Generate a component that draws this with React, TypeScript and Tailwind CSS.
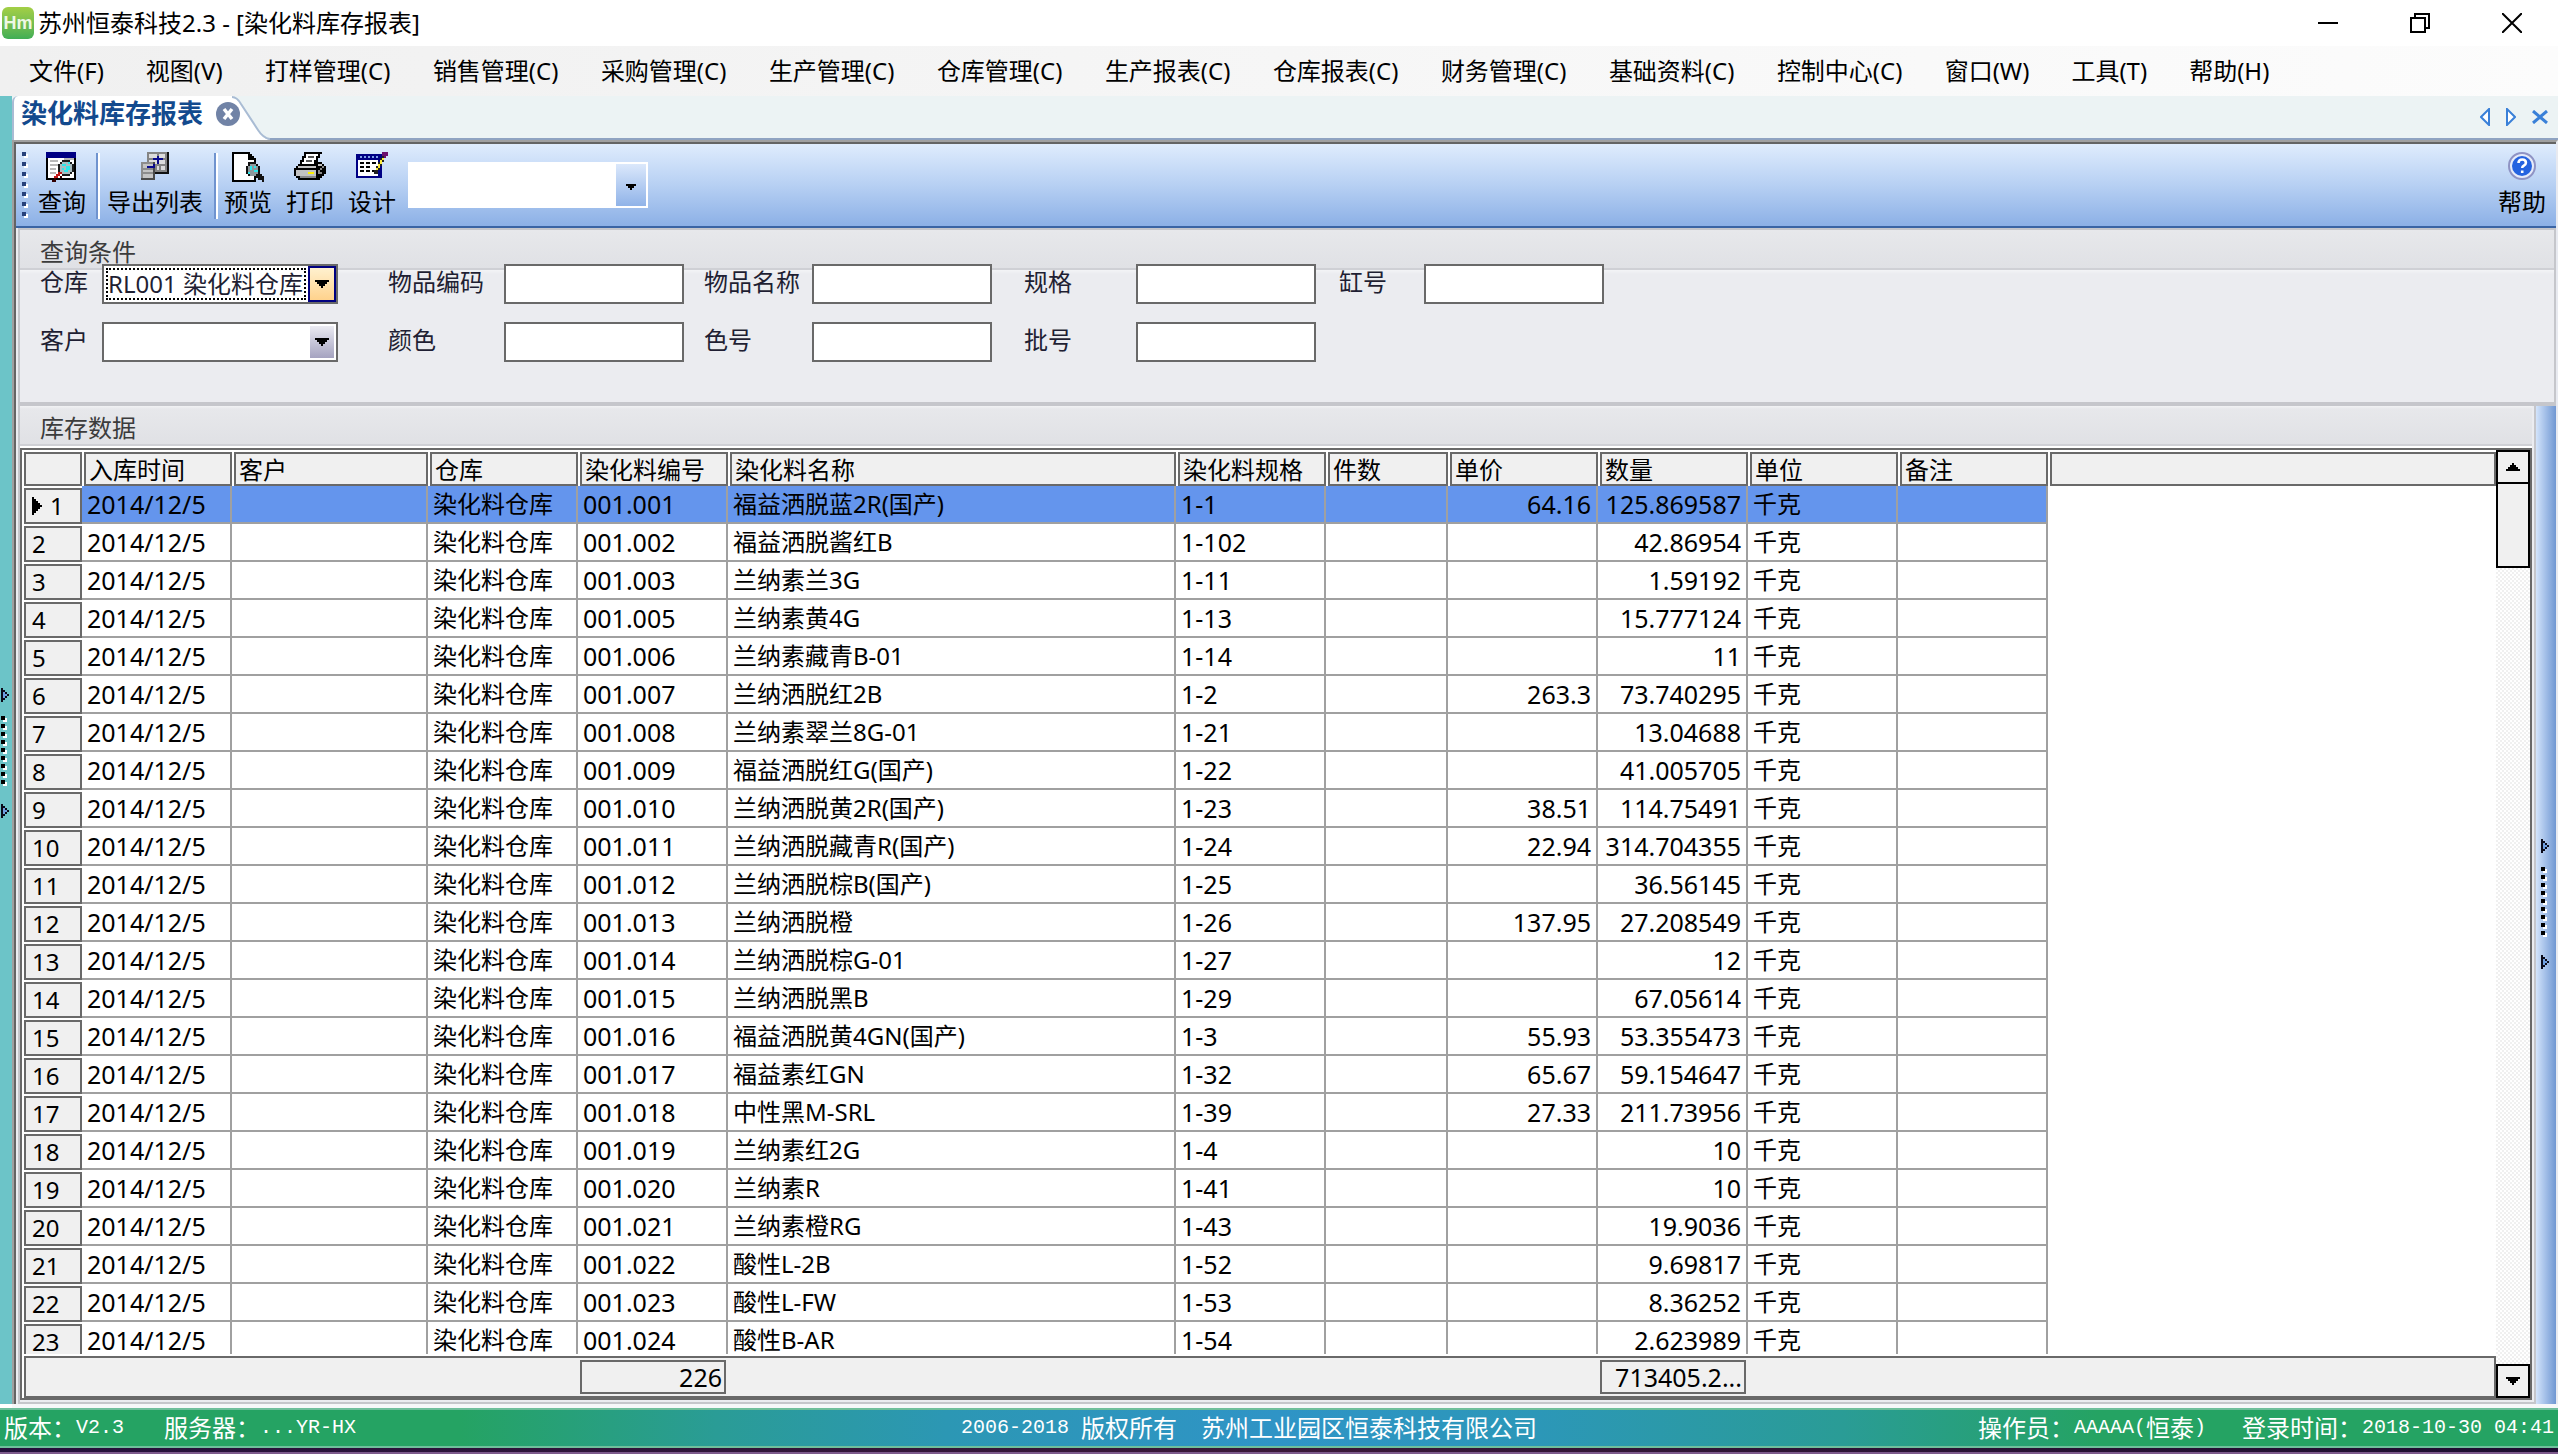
import React from "react";

const menus = [
  "文件(F)", "视图(V)", "打样管理(C)", "销售管理(C)", "采购管理(C)", "生产管理(C)", "仓库管理(C)",
  "生产报表(C)", "仓库报表(C)", "财务管理(C)", "基础资料(C)", "控制中心(C)", "窗口(W)", "工具(T)", "帮助(H)",
];

type Row = [code: string, name: string, spec: string, price: string, qty: string];

const rows: Row[] = [
  ["001.001", "福益洒脱蓝2R(国产)", "1-1", "64.16", "125.869587"],
  ["001.002", "福益洒脱酱红B", "1-102", "", "42.86954"],
  ["001.003", "兰纳素兰3G", "1-11", "", "1.59192"],
  ["001.005", "兰纳素黄4G", "1-13", "", "15.777124"],
  ["001.006", "兰纳素藏青B-01", "1-14", "", "11"],
  ["001.007", "兰纳洒脱红2B", "1-2", "263.3", "73.740295"],
  ["001.008", "兰纳素翠兰8G-01", "1-21", "", "13.04688"],
  ["001.009", "福益洒脱红G(国产)", "1-22", "", "41.005705"],
  ["001.010", "兰纳洒脱黄2R(国产)", "1-23", "38.51", "114.75491"],
  ["001.011", "兰纳洒脱藏青R(国产)", "1-24", "22.94", "314.704355"],
  ["001.012", "兰纳洒脱棕B(国产)", "1-25", "", "36.56145"],
  ["001.013", "兰纳洒脱橙", "1-26", "137.95", "27.208549"],
  ["001.014", "兰纳洒脱棕G-01", "1-27", "", "12"],
  ["001.015", "兰纳洒脱黑B", "1-29", "", "67.05614"],
  ["001.016", "福益洒脱黄4GN(国产)", "1-3", "55.93", "53.355473"],
  ["001.017", "福益素红GN", "1-32", "65.67", "59.154647"],
  ["001.018", "中性黑M-SRL", "1-39", "27.33", "211.73956"],
  ["001.019", "兰纳素红2G", "1-4", "", "10"],
  ["001.020", "兰纳素R", "1-41", "", "10"],
  ["001.021", "兰纳素橙RG", "1-43", "", "19.9036"],
  ["001.022", "酸性L-2B", "1-52", "", "9.69817"],
  ["001.023", "酸性L-FW", "1-53", "", "8.36252"],
  ["001.024", "酸性B-AR", "1-54", "", "2.623989"],
];

const headers = ["入库时间", "客户", "仓库", "染化料编号", "染化料名称", "染化料规格", "件数", "单价", "数量", "单位", "备注"];

function Columns() {
  return (
    <colgroup>
      <col className="w-[58px]" />
      <col className="w-[150px]" />
      <col className="w-[196px]" />
      <col className="w-[150px]" />
      <col className="w-[150px]" />
      <col className="w-[448px]" />
      <col className="w-[150px]" />
      <col className="w-[122px]" />
      <col className="w-[150px]" />
      <col className="w-[150px]" />
      <col className="w-[150px]" />
      <col className="w-[150px]" />
      <col />
    </colgroup>
  );
}

function Pixel({ children }: { children: React.ReactNode }) {
  return (
    <svg viewBox="0 0 16 16" className="h-8 w-8 shrink-0" shapeRendering="crispEdges" aria-hidden="true">
      {children}
    </svg>
  );
}

function QueryIcon() {
  return (
    <Pixel>
      <path d="M0 0h15v14H0z" fill="#000" />
      <path d="M0 0h15v3H0z" fill="#000084" />
      <path d="M1 3h13v10H1z" fill="#fff" />
      <path d="M2 4h4v1H2zM2 6h4v1H2zM2 8h3v1H2zM2 10h3v1H2zM9 3h5v1H9z" fill="#b8b8b8" />
      <path d="M8 4h4v1h1v1h1v4h-1v1h-1v1H8v-1H7v-1H6V6h1V5h1z" fill="#1a1a1a" />
      <path d="M8 5h4v1h1v4h-1v1H8v-1H7V6h1z" fill="#a9bcc0" />
      <path d="M8 6h2v1H8zM10 7h2v2h-2zM8 8h1v1H8zM11 5h1v1h-1zM9 9h2v1H9z" fill="#2ee6ea" />
      <path d="M6 10h2v1H7v1H6v1H5v1H4v-2h1v-1h1z" fill="#c01818" />
      <path d="M4 13h1v2H3v-1h1zM7 12h1v1H7z" fill="#300" />
    </Pixel>
  );
}

function ExportIcon() {
  return (
    <Pixel>
      <path d="M4 0h11v11H4z" fill="#111" />
      <path d="M4 0h10v10H4z" fill="#848484" />
      <path d="M5 1h4v2H5zM10 1h3v2h-3zM5 4h4v2H5zM10 4h3v2h-3zM9 7h1v2H9zM11 7h2v2h-2z" fill="#dcdcdc" />
      <path d="M1 5h7v9H1z" fill="#4a4a4a" />
      <path d="M1 5h6v8H1z" fill="#8c8c8c" />
      <path d="M2 6h5v2H2zM2 9h5v1H2zM2 11h5v2H2z" fill="#c4c4c4" />
      <path d="M9 2h1v4H9zM7 3h5v1H7zM4 7h4v1H4zM7 6h1v1H7z" fill="#0a0a8c" />
    </Pixel>
  );
}

function PreviewIcon() {
  return (
    <Pixel>
      <path d="M0 0h9v1h1v1h1v1h1v12H0z" fill="#000" />
      <path d="M1 1h7v3h3v10H1z" fill="#fff" />
      <path d="M8 5h4v1h1v1h1v4h1v1h1v2h1v1h-2v-1h-2v-1h-1v-1H8v-1H7V7h1z" fill="#111" />
      <path d="M9 6h3v1h1v4h-1v1H9v-1H8V7h1z" fill="#8e989c" />
      <path d="M9 7h1v2H9zM11 9h2v1h-2zM8 10h1v1H8zM11 7h1v1h-1z" fill="#2ee6ea" />
    </Pixel>
  );
}

function PrintIcon() {
  return (
    <Pixel>
      <path d="M5 0h9v1h-1v2h-1v2h2v1h1v1h1v4h-1v1h-1v1h-1v1H2v-1H1v-1H0V8h1V7h1V6h1V4h1V2h1z" fill="#000" />
      <path d="M6 1h6v1h-1v2h-1v2H4V5h1V3h1z" fill="#fff" />
      <path d="M7 2h3v1H7zM6 4h3v1H6z" fill="#555" />
      <path d="M2 7h9v1H2zM1 9h10v3H1zM12 6h2v1h-2z" fill="#c2c2c2" />
      <path d="M3 13h8v-1H3zM13 8h1v1h-1zM12 9h1v2h-1zM14 7h1v1h-1zM13 10h1v1h-1z" fill="#8a8a8a" />
      <path d="M7 10h3v1H7z" fill="#fff100" />
    </Pixel>
  );
}

function DesignIcon() {
  return (
    <Pixel>
      <path d="M0 1h13v12H0z" fill="#000084" />
      <path d="M2 2h1v1H2zM4 2h1v1H4zM6 2h1v1H6zM8 2h1v1H8zM10 2h1v1h-1z" fill="#7ea0e8" />
      <path d="M1 4h10v8H1z" fill="#fff" />
      <path d="M2 5h2v1H2zM5 5h2v1H5zM8 5h2v1H8zM2 7h2v1H2zM5 7h2v1H5zM2 9h2v1H2zM5 9h2v1H5zM8 9h1v1H8z" fill="#000" />
      <path d="M13 1h2v2h-1v2h-1v2h-1v2h-1v2H9V9h1V7h1V5h1V3h1z" fill="#222" />
      <path d="M13 3h1v1h-1v2h-1v2h-1v1h-1V8h1V6h1V4h1z" fill="#ffec3d" />
      <path d="M13 0h3v2h-1v1h-1V2h-1z" fill="#6b0f6b" />
    </Pixel>
  );
}

function ToolButton({ label, icon }: { label: string; icon: React.ReactNode }) {
  return (
    <button className="flex flex-col items-center px-[7px] pt-2 text-[24px] leading-7 text-black">
      {icon}
      <span className="pt-1">{label}</span>
    </button>
  );
}

function Divider() {
  return <span className="mt-[9px] h-[66px] w-1 shrink-0 border-l-2 border-[#6f93cf] bg-white" />;
}

function SplitterGrip() {
  return (
    <svg viewBox="0 0 5 66" className="h-[132px] w-[10px] shrink-0" shapeRendering="crispEdges" aria-hidden="true">
      {[0, 58].map((y) => (
        <g key={y}>
          <path d={`M0 ${y}h1v1h1v1h1v1h1v1h-1v1h-1v1h-1v1h-1z`} fill="#0b0b1a" />
          <path d={`M1 ${y + 2}h1v1h1v1h-1v1h-1z`} fill="#6f9fe0" />
        </g>
      ))}
      {Array.from({ length: 9 }, (_, i) => (
        <g key={i}>
          <path d={`M1 ${15 + i * 4}h2v2h-2z`} fill="#fff" />
          <path d={`M0 ${14 + i * 4}h2v2h-2z`} fill="#000" />
        </g>
      ))}
    </svg>
  );
}

function Arrow({ up = false }: { up?: boolean }) {
  return (
    <svg viewBox="0 0 7 4" className="h-2 w-[14px]" shapeRendering="crispEdges" aria-hidden="true">
      <path d={up ? "M3 0h1v1h1v1h1v1h1v1H0V3h1V2h1V1h1z" : "M0 0h7v1H6v1H5v1H4v1H3V3H2V2H1V1H0z"} fill="#000" />
    </svg>
  );
}

function Field({ id, label, gap }: { id: string; label: string; gap: string }) {
  return (
    <div className="flex h-10 items-start">
      <label htmlFor={id} className={`${gap} shrink-0 leading-9`}>{label}</label>
      <input id={id} className="h-10 w-[180px] border-2 border-[#696969] bg-white px-1 text-[24px] outline-none" />
    </div>
  );
}

function Mono({ children }: { children: React.ReactNode }) {
  return <span className="whitespace-pre font-['Liberation_Mono',monospace] text-[20px]">{children}</span>;
}

export default function App() {
  return (
    <div className="flex h-screen flex-col overflow-hidden bg-white font-['Noto_Sans','Noto_Sans_CJK_SC',sans-serif] text-[24px] text-black">
      <header className="flex h-[46px] shrink-0 items-center bg-white">
        <span className="ml-[2px] flex h-8 w-8 items-center justify-center rounded-md bg-linear-to-b from-[#a3cf45] to-[#3fae55] font-['Liberation_Sans',sans-serif] text-[18px] font-bold text-[#eef8e4]">
          Hm
        </span>
        <h1 className="ml-1 flex-1">苏州恒泰科技2.3 - [染化料库存报表]</h1>
        <div className="flex h-full">
          <button aria-label="最小化" className="flex w-[92px] items-center justify-center">
            <svg viewBox="0 0 20 20" className="h-5 w-5"><path d="M0 10h20" stroke="#000" strokeWidth="2" /></svg>
          </button>
          <button aria-label="还原" className="flex w-[92px] items-center justify-center">
            <svg viewBox="0 0 20 20" className="h-5 w-5" fill="none" stroke="#000" strokeWidth="2">
              <path d="M1 5h14v14H1zM5 5V1h14v14h-4" />
            </svg>
          </button>
          <button aria-label="关闭" className="flex w-[92px] items-center justify-center">
            <svg viewBox="0 0 20 20" className="h-5 w-5"><path d="M0 0l20 20M20 0L0 20" stroke="#000" strokeWidth="2" /></svg>
          </button>
        </div>
      </header>

      <nav className="flex h-[50px] shrink-0 items-center bg-linear-to-r from-[#f0f0f0] to-[#fcfcfc] pl-2">
        {menus.map((m) => (
          <button key={m} className={m.length > 5 ? "w-[168px] shrink-0" : "shrink-0 px-[21px]"}>{m}</button>
        ))}
      </nav>

      <div className="flex min-h-0 flex-1">
        <div className="flex w-3 shrink-0 items-center justify-center bg-[#6cc4c8] pt-2">
          <SplitterGrip />
        </div>

        <main className="flex min-w-0 flex-1 flex-col">
          <div className="flex h-11 shrink-0 justify-between border-b-2 border-[#8fa3c1] bg-[#ecf3f4]">
            <div className="relative -mb-[2px] flex h-11 items-start rounded-tl-md border-l-2 border-[#a9bcd4] bg-white pl-[7px]">
              <svg viewBox="0 0 40 44" className="absolute top-0 left-full h-11 w-10" aria-hidden="true">
                <path d="M0 0Q5 1 9 8L26 34Q31 43 38 44H0z" fill="#fff" />
                <path d="M0 1Q5 1 9 8L26 34Q31 42 38 43" fill="none" stroke="#a9bcd4" strokeWidth="2" />
              </svg>
              <span className="text-[26px] leading-[34px] font-bold text-[#134a8e]">染化料库存报表</span>
              <button aria-label="关闭标签" className="relative z-10 mt-[6px] -mr-2 ml-[13px]">
                <svg viewBox="0 0 24 24" className="h-6 w-6">
                  <circle cx="12" cy="12" r="12" fill="#7183a6" />
                  <path d="M8 7l8 10M16 7L8 17" stroke="#fff" strokeWidth="3.5" />
                </svg>
              </button>
            </div>
            <div className="flex items-center gap-4 pr-[10px]">
              <button aria-label="上一个标签">
                <svg viewBox="0 0 10 18" className="h-[18px] w-[10px]"><path d="M9 1v16L1 9z" fill="#fff" stroke="#3a80d8" strokeWidth="2" /></svg>
              </button>
              <button aria-label="下一个标签">
                <svg viewBox="0 0 10 18" className="h-[18px] w-[10px]"><path d="M1 1v16l8-8z" fill="#fff" stroke="#3a80d8" strokeWidth="2" /></svg>
              </button>
              <button aria-label="关闭当前标签">
                <svg viewBox="0 0 16 14" className="h-[14px] w-4"><path d="M1 1l14 12M15 1L1 13" stroke="#3a80d8" strokeWidth="3" /></svg>
              </button>
            </div>
          </div>

          <div className="flex min-h-0 flex-1 border-t-2 border-r-2 border-l-2 border-t-[#a0a0a0] border-r-[#e8eaf0] border-l-[#a0a0a0]">
            <div className="flex min-w-0 flex-1 flex-col border-t-2 border-l-2 border-[#646464] bg-[#ebecf0]">
              <div className="flex h-[84px] shrink-0 items-start border-b-2 border-[#3a64a4] bg-linear-to-b from-[#dfecfd] via-[#b7d0f3] to-[#8cb0e6]">
                <svg viewBox="0 0 3 33" className="mt-2 ml-[6px] h-[66px] w-[6px] shrink-0" shapeRendering="crispEdges" aria-hidden="true">
                  {Array.from({ length: 7 }, (_, i) => (
                    <g key={i}>
                      <path d={`M1 ${i * 5 + 1}h2v2h-2z`} fill="#fff" />
                      <path d={`M0 ${i * 5}h2v2h-2z`} fill="#27417a" />
                    </g>
                  ))}
                </svg>
                <div className="ml-[3px] flex">
                  <ToolButton label="查询" icon={<QueryIcon />} />
                </div>
                <div className="ml-[3px] flex">
                  <Divider />
                  <ToolButton label="导出列表" icon={<ExportIcon />} />
                  <span className="w-1" />
                  <Divider />
                </div>
                <div className="-ml-px flex">
                  <ToolButton label="预览" icon={<PreviewIcon />} />
                  <ToolButton label="打印" icon={<PrintIcon />} />
                  <ToolButton label="设计" icon={<DesignIcon />} />
                </div>
                <div className="relative mt-[18px] ml-[5px] h-[46px] w-60">
                  <select aria-label="报表格式" className="h-full w-full appearance-none bg-white outline-none">
                    <option></option>
                  </select>
                  <span className="pointer-events-none absolute inset-y-[2px] right-[2px] flex w-[30px] items-center justify-center bg-linear-to-b from-[#dbe8fb] to-[#90b3e8] pt-1">
                    <svg viewBox="0 0 5 3" className="h-[6px] w-[10px]" shapeRendering="crispEdges" aria-hidden="true">
                      <path d="M0 0h5v1H4v1H3v1H2V2H1V1H0z" fill="#000" />
                    </svg>
                  </span>
                </div>
                <button className="mr-[10px] ml-auto flex flex-col items-center pt-2 leading-7">
                  <svg viewBox="0 0 28 28" className="h-7 w-7" aria-hidden="true">
                    <circle cx="14" cy="14" r="13" fill="#e6ebfa" stroke="#8f93c4" strokeWidth="2" />
                    <circle cx="14" cy="14" r="10" fill="#2563e0" />
                    <path d="M10.500 11q0-3.500 3.700-3.500t3.700 3.200q0 2-2.200 3-1.500.8-1.500 2.300M14.200 18.500v2.500" fill="none" stroke="#fff" strokeWidth="2.600" />
                  </svg>
                  <span className="pt-2">帮助</span>
                </button>
              </div>

              <section className="ml-[2px] shrink-0 border-x-2 border-t-2 border-b-4 border-[#c5c6cb] bg-[linear-gradient(#e7e8eb_0,#e0e1e5_38px,#cfd0d5_38px,#cfd0d5_40px,#f3f4f6_40px,#ebecf0_44px)] pb-10 pl-5 text-[#1f1f33]">
                <h2 className="h-[34px] pt-[5px] leading-[34px] text-[#3c3c3c]">查询条件</h2>
                <form className="grid w-fit grid-cols-[348px_316px_320px_315px_280px] gap-y-[18px]">
                  <div className="flex">
                    <label htmlFor="warehouse" className="w-[62px] leading-9">仓库</label>
                    <div className="relative h-10 w-[236px] border-2 border-[#696969] bg-white">
                      <select id="warehouse" className="absolute top-[2px] left-[2px] h-8 w-[200px] appearance-none border-2 border-dotted border-black bg-white text-[24px] leading-7 text-[#1f1f33] outline-none">
                        <option>RL001 染化料仓库</option>
                      </select>
                      <span className="pointer-events-none absolute inset-y-0 right-0 flex w-7 items-center justify-center border-2 border-[#000080] bg-linear-to-b from-[#fff1cf] to-[#ffd28c]">
                        <Arrow />
                      </span>
                    </div>
                  </div>
                  <Field id="code" label="物品编码" gap="w-[116px]" />
                  <Field id="name" label="物品名称" gap="w-[108px]" />
                  <Field id="spec" label="规格" gap="w-[112px]" />
                  <Field id="vat" label="缸号" gap="w-[85px]" />
                  <div className="flex">
                    <label htmlFor="customer" className="w-[62px] leading-9">客户</label>
                    <div className="relative h-10 w-[236px] border-2 border-[#696969] bg-white">
                      <select id="customer" className="h-full w-full appearance-none bg-white outline-none">
                        <option></option>
                      </select>
                      <span className="pointer-events-none absolute inset-y-[2px] right-[2px] flex w-6 items-center justify-center bg-linear-to-b from-[#ebebf2] to-[#a5a3c0]">
                        <Arrow />
                      </span>
                    </div>
                  </div>
                  <Field id="color" label="颜色" gap="w-[116px]" />
                  <Field id="colorNo" label="色号" gap="w-[108px]" />
                  <Field id="batch" label="批号" gap="w-[112px]" />
                </form>
              </section>

              <div className="flex min-h-0 flex-1">
                <section className="ml-[2px] flex min-w-0 flex-1 flex-col border-x-2 border-b-2 border-[#c5c6cb] pr-[2px] pb-[2px]">
                  <h2 className="h-[42px] shrink-0 bg-[linear-gradient(#f1f2f4_0,#e7e8eb_3px,#e0e1e5_38px,#cfd0d5_38px,#cfd0d5_40px,#fff_40px)] pl-5 leading-[44px] text-[#3c3c3c]">库存数据</h2>
                  <div className="flex min-h-0 flex-1 border-2 border-[#696969] bg-white">
                    <div className="flex min-w-0 flex-1 flex-col pl-[2px]">
                      <div className="min-h-0 flex-1 overflow-hidden">
                        <table className="w-full table-fixed border-separate border-spacing-0">
                          <Columns />
                          <thead>
                            <tr>
                              <th className="p-0 pt-[2px]"><div className="h-[34px] border-2 border-[#696969] bg-[#f0f0f0]" /></th>
                              {headers.map((h) => (
                                <th key={h} className="p-0 pt-[2px] pl-[2px] text-left font-normal">
                                  <div className="h-[34px] border-2 border-[#696969] bg-[#f0f0f0] pl-[3px] leading-[32px]">{h}</div>
                                </th>
                              ))}
                              <th className="p-0 pt-[2px] pl-[2px]"><div className="h-[34px] border-2 border-[#696969] bg-[#f0f0f0]" /></th>
                            </tr>
                          </thead>
                          <tbody className="leading-9 [&_td]:h-[38px] [&_td]:p-0 [&_td.c]:border-r-2 [&_td.c]:border-b-2 [&_td.c]:border-[#a0a0a0] [&_td.c]:px-[5px]">
                            {rows.map(([code, name, spec, price, qty], i) => (
                              <tr key={code} className={i === 0 ? "[&_td.c]:bg-[#6495ed]" : ""}>
                                <td>
                                  <div className="mt-[2px] flex h-9 items-center gap-2 border-2 border-[#696969] bg-[#f0f0f0] pl-[6px] leading-7">
                                    {i === 0 && (
                                      <svg viewBox="0 0 5 9" className="h-[18px] w-[10px]" shapeRendering="crispEdges" aria-hidden="true">
                                        <path d="M0 0h1v1h1v1h1v1h1v1h1v1H4v1H3v1H2v1H1v1H0z" fill="#000" />
                                      </svg>
                                    )}
                                    {i + 1}
                                  </div>
                                </td>
                                <td className="c text-[25px]">2014/12/5</td>
                                <td className="c" />
                                <td className="c">染化料仓库</td>
                                <td className="c text-[25px]">{code}</td>
                                <td className="c">{name}</td>
                                <td className="c text-[25px]">{spec}</td>
                                <td className="c" />
                                <td className="c text-right text-[25px]">{price}</td>
                                <td className="c text-right text-[25px]">{qty}</td>
                                <td className="c">千克</td>
                                <td className="c" />
                                <td />
                              </tr>
                            ))}
                          </tbody>
                        </table>
                      </div>
                      <div className="mt-[2px] -mb-[2px] h-[44px] shrink-0 border-2 border-b-4 border-[#696969] bg-[#f0f0f0]">
                        <table className="-ml-[2px] w-full table-fixed border-separate border-spacing-0 text-[25px]">
                          <Columns />
                          <tbody>
                            <tr>
                              <td colSpan={4} className="p-0" />
                              <td className="p-0 pt-[2px] pr-[2px] pl-[2px]">
                                <div className="h-[34px] border-2 border-[#696969] pr-[2px] text-right leading-[30px]">226</div>
                              </td>
                              <td colSpan={4} className="p-0" />
                              <td className="p-0 pt-[2px] pr-[2px] pl-[2px]">
                                <div className="h-[34px] border-2 border-[#696969] pr-[2px] text-right leading-[30px]">713405.2...</div>
                              </td>
                              <td colSpan={3} className="p-0" />
                            </tr>
                          </tbody>
                        </table>
                      </div>
                    </div>
                    <div className="flex w-[34px] shrink-0 flex-col bg-[repeating-conic-gradient(#f0f0f0_0_25%,#fff_0_50%)] bg-[length:4px_4px]">
                      <button aria-label="向上滚动" className="flex h-[34px] items-center justify-center border-2 border-black bg-[#f0f0f0]"><Arrow up /></button>
                      <div className="-mt-[2px] h-[86px] border-2 border-black bg-[#f0f0f0]" />
                      <button aria-label="向下滚动" className="mt-auto flex h-[34px] items-center justify-center border-2 border-black bg-[#f0f0f0]"><Arrow /></button>
                    </div>
                  </div>
                </section>
                <div className="flex w-5 shrink-0 items-center justify-center bg-linear-to-r from-[#d3e4fb] to-[#7097d2]">
                  <SplitterGrip />
                </div>
              </div>
            </div>
          </div>
        </main>
      </div>

      <div className="ml-3 h-1 shrink-0 bg-[#f6f7f9]" />
      <footer className="flex h-10 shrink-0 items-center border-y-2 border-[#6fbf9c] bg-[linear-gradient(90deg,#25a363_0%,#25a363_18%,#2a9c96_28%,#2c97b4_37%,#2f94c6_50%,#2c97b8_60%,#2a9c96_72%,#25a363_82%,#25a363_100%)] px-1 leading-9 text-white">
        <div className="flex flex-1 items-center gap-10">
          <span className="flex items-center">版本：<Mono>V2.3</Mono></span>
          <span className="flex items-center">服务器：<Mono>...YR-HX</Mono></span>
        </div>
        <div className="flex items-center pr-[60px]">
          <Mono>2006-2018 </Mono>版权所有<Mono>{"  "}</Mono>苏州工业园区恒泰科技有限公司
        </div>
        <div className="flex flex-1 items-center justify-end gap-9">
          <span className="flex items-center">操作员：<Mono>AAAAA(</Mono>恒泰<Mono>)</Mono></span>
          <span className="flex items-center">登录时间：<Mono>2018-10-30 04:41</Mono></span>
        </div>
      </footer>
      <div className="h-[6px] shrink-0 border-b-2 border-[#7d5a8c] bg-linear-to-r from-[#24103a] via-[#3a1838] to-[#1c0d30]" />
    </div>
  );
}
